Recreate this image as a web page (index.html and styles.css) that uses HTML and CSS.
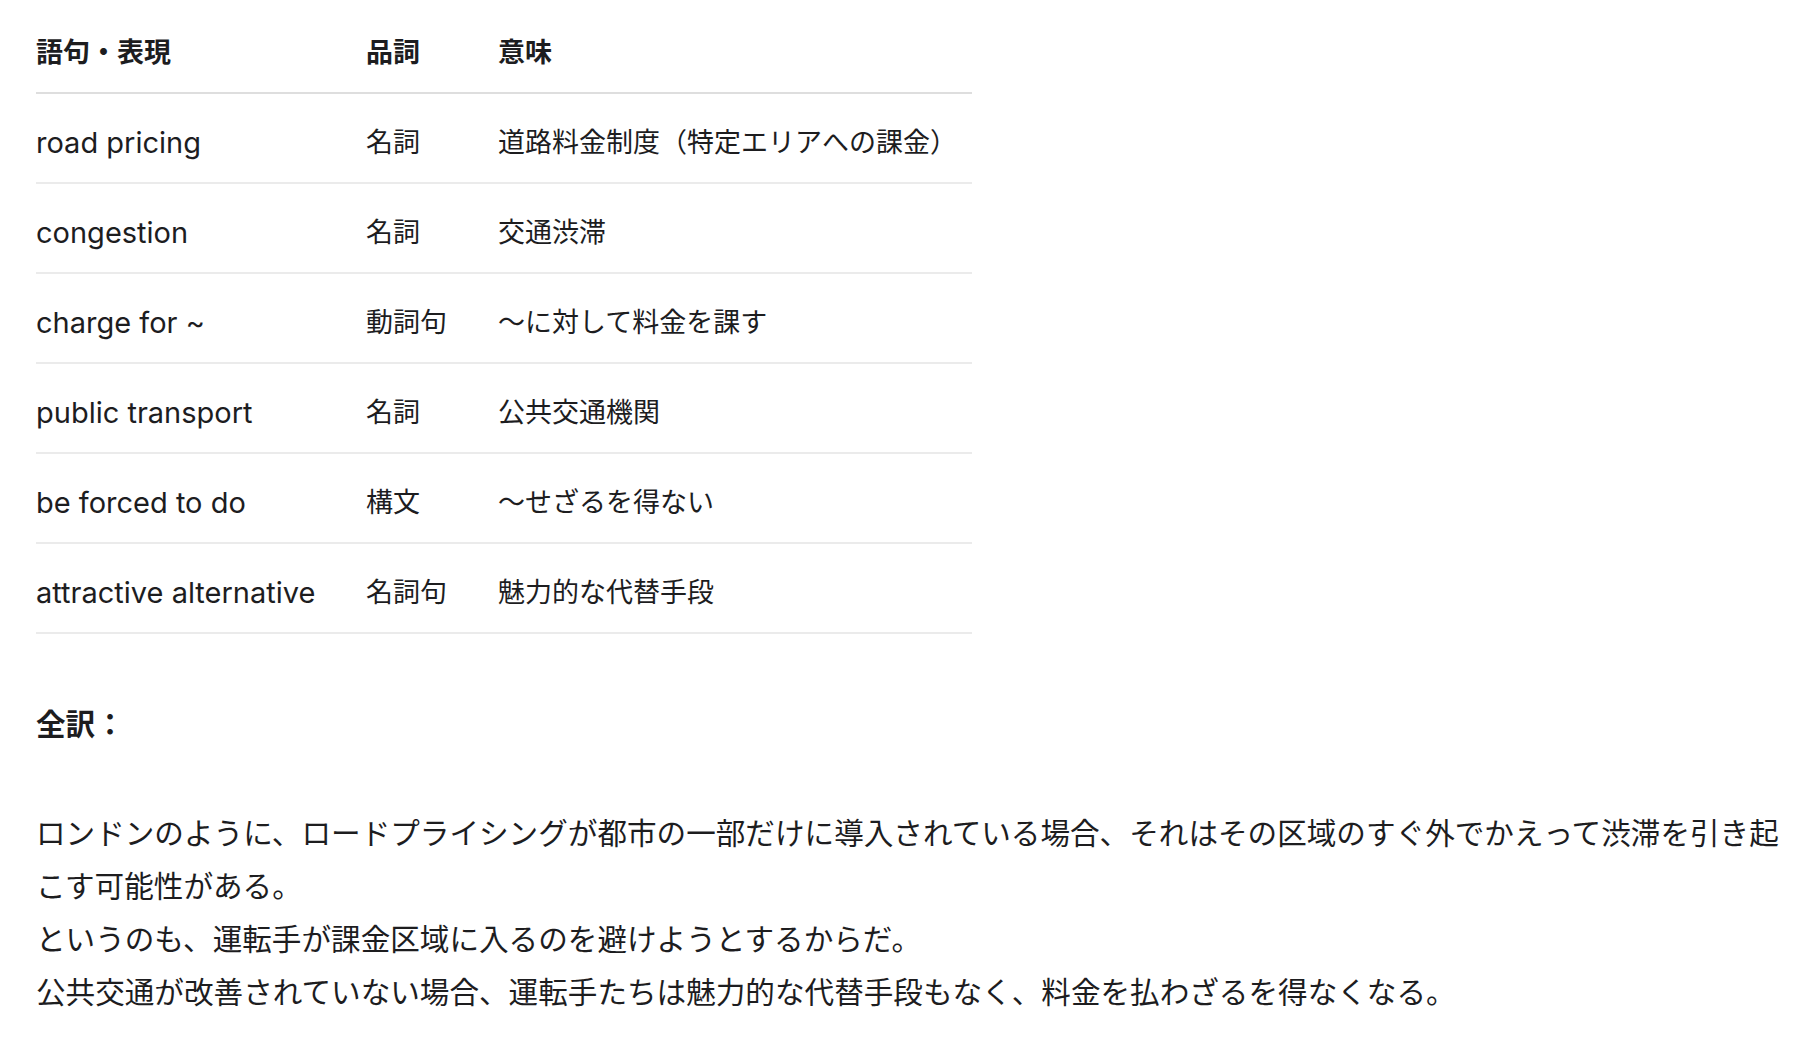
FILE: index.html
```html
<!DOCTYPE html>
<html lang="ja">
<head>
<meta charset="utf-8">
<title>語句・表現</title>
<link rel="stylesheet" href="styles.css">
</head>
<body>
<main class="page">
  <table class="vocab">
    <colgroup>
      <col class="col-term">
      <col class="col-pos">
      <col class="col-meaning">
    </colgroup>
    <thead>
      <tr><th>語句・表現</th><th>品詞</th><th>意味</th></tr>
    </thead>
    <tbody>
      <tr><td class="en">road pricing</td><td>名詞</td><td>道路料金制度（特定エリアへの課金）</td></tr>
      <tr><td class="en">congestion</td><td>名詞</td><td>交通渋滞</td></tr>
      <tr><td class="en">charge for ~</td><td>動詞句</td><td>〜に対して料金を課す</td></tr>
      <tr><td class="en">public transport</td><td>名詞</td><td>公共交通機関</td></tr>
      <tr><td class="en">be forced to do</td><td>構文</td><td>〜せざるを得ない</td></tr>
      <tr><td class="en">attractive alternative</td><td>名詞句</td><td>魅力的な代替手段</td></tr>
    </tbody>
  </table>

  <h2 class="section-title">全訳：</h2>

  <p class="translation">ロンドンのように、ロードプライシングが都市の一部だけに導入されている場合、それはその区域のすぐ外でかえって渋滞を引き起こす可能性がある。<br>というのも、運転手が課金区域に入るのを避けようとするからだ。<br>公共交通が改善されていない場合、運転手たちは魅力的な代替手段もなく、料金を払わざるを得なくなる。</p>
</main>
</body>
</html>
```

FILE: styles.css
```css
html, body {
  margin: 0;
  padding: 0;
  background: #ffffff;
}

body {
  font-family: "Inter", "Noto Sans CJK JP", sans-serif;
  color: #1d1d1f;
}

.page {
  padding: 8px 18px 0 36px;
}

.vocab {
  border-collapse: collapse;
  table-layout: fixed;
  width: 936px;
  font-size: 27px;
  line-height: 43px;
}

.col-term { width: 330px; }
.col-pos { width: 132px; }
.col-meaning { width: 474px; }

.vocab th {
  text-align: left;
  font-weight: 700;
  padding: 23px 0 18px 0;
  border-bottom: 2px solid #dedede;
  white-space: nowrap;
}

.vocab td {
  padding: 27px 0 18px 0;
  border-bottom: 2px solid #ebebeb;
  white-space: nowrap;
}

.vocab td.en {
  font-size: 29px;
}

.section-title {
  margin: 64px 0 0 0;
  font-size: 29.6px;
  line-height: 53px;
  font-weight: 700;
}

.translation {
  margin: 56px 0 0 0;
  font-size: 29.6px;
  line-height: 53px;
}
```
